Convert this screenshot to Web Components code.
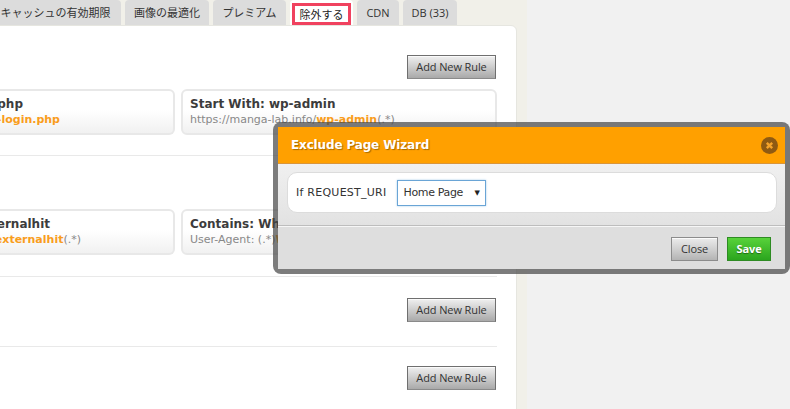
<!DOCTYPE html>
<html>
<head>
<meta charset="utf-8">
<style>
html,body{margin:0;height:409px;overflow:hidden;background:#f1f1f1;font-family:"DejaVu Sans","Noto Sans CJK JP",sans-serif}
</style>
</head>
<body>
<settings-page>
  <tab-bar slot="tabs">
    <tab-item style="--w:131px;margin-left:-10px;">キャッシュの有効期限</tab-item>
    <tab-item style="--w:84px">画像の最適化</tab-item>
    <tab-item style="--w:73px">プレミアム</tab-item>
    <tab-item style="--w:63px" active>除外する</tab-item>
    <tab-item style="--w:42px" latin>CDN</tab-item>
    <tab-item style="--w:54px" latin>DB (33)</tab-item>
  </tab-bar>
  <rule-section style="--top:29px;--bottom:20px">
    <rule-card title-end="142" sub-end="105" title-text="Is: wp-login.php" sub-text="https://manga-lab.info/" hit="wp-login.php"></rule-card>
    <rule-card wide title-text="Start With: wp-admin" sub-text="https://manga-lab.info/" hit="wp-admin" tail="(.*)"></rule-card>
  </rule-section>
  <rule-section style="--top:19px;--bottom:21px">
    <rule-card title-end="115" sub-end="84" title-text="Contains: facebookexternalhit" sub-text="User-Agent: (.*)" hit="facebookexternalhit" tail="(.*)"></rule-card>
    <rule-card wide title-text="Contains: WhatsApp" sub-text="User-Agent: (.*)" hit="WhatsApp" tail="(.*)"></rule-card>
  </rule-section>
  <rule-section style="--top:21px;--bottom:24px"></rule-section>
  <rule-section style="--top:19px;--bottom:24px" last></rule-section>
</settings-page>
<exclude-wizard></exclude-wizard>

<script>
const buttonStyle = `
.btn{
    box-sizing:border-box;
    display:flex;
    align-items:center;
    justify-content:center;
    height:24px;
    padding-bottom:1px;
    font:11px "Open Sans","DejaVu Sans",sans-serif;
    letter-spacing:-.1px;
    color:#333;
    border:1px solid #6f6f6f;
    border-bottom-color:#8a8a8a;
    background:linear-gradient(#f0f0f0,#a9a9a9);
    box-shadow:inset 0 1px 0 #fafafa
}
`

class SettingsPage extends HTMLElement{
    constructor(){
        super();
        this._shadowroot = this.attachShadow({mode:'open'})
    }
    connectedCallback(){
        this._shadowroot.innerHTML=`
        <style>
        :host{display:block;width:517px;height:409px;padding-right:10px;background:#f1f0e9;overflow:hidden}
        .panel{
            box-sizing:border-box;
            height:400px;
            margin-left:-10px;
            padding:0 19px 0 0;
            background:#fff;
            border:1px solid #e6e6e0;
            border-radius:0 6px 0 0
        }
        </style>
        <slot name="tabs"></slot>
        <div class="panel"><slot></slot></div>
        `
    }
}

class TabBar extends HTMLElement{
    constructor(){
        super();
        this.attachShadow({mode:'open'}).innerHTML=`
        <style>
        :host{display:flex;height:25px;gap:4px;align-items:stretch}
        </style>
        <slot></slot>
        `
    }
}

class TabItem extends HTMLElement{
    constructor(){
        super();
        this.attachShadow({mode:'open'}).innerHTML=`
        <style>
        :host{
            box-sizing:border-box;
            display:flex;
            flex:none;
            width:var(--w);
            align-items:center;
            justify-content:center;
            padding-bottom:1px;
            font:11px "Noto Sans CJK JP",sans-serif;
            color:#333;
            background:#dcdcdc;
            border-radius:4px 4px 0 0
        }
        :host([latin]){font:11px "Open Sans",sans-serif}
        :host([active]){
            color:#222;
            background:#fff
        }
        .mark{display:flex;align-items:center;justify-content:center;box-sizing:border-box}
        :host([active]) .mark{
            width:59px;
            height:22px;
            margin-top:3px;
            border:3px solid #f0425f
        }
        </style>
        <div class="mark"><slot></slot></div>
        `
    }
}

class RuleSection extends HTMLElement{
    constructor(){
        super();
        this.attachShadow({mode:'open'}).innerHTML=`
        <style>
        ${buttonStyle}
        :host{
            display:block;
            padding:var(--top) 0 var(--bottom);
            border-bottom:1px solid #e9e9e9
        }
        :host([last]){border-bottom:0}
        .head{display:flex;justify-content:flex-end;padding-right:1px}
        .btn{width:89px}
        .cards{display:flex;gap:6px}
        .cards.filled{margin-top:10px}
        </style>
        <div class="head"><div class="btn">Add New Rule</div></div>
        <div class="cards"><slot></slot></div>
        `
    }
    connectedCallback(){
        if(this.children.length){
            this.shadowRoot.querySelector('.cards').classList.add('filled')
        }
    }
}

class RuleCard extends HTMLElement{
    constructor(){
        super();
        this._shadowroot = this.attachShadow({mode:'open'})
    }
    connectedCallback(){
        const titleEnd = this.getAttribute('title-end')
        const subEnd = this.getAttribute('sub-end')
        const tail = this.getAttribute('tail') || ''
        this._shadowroot.innerHTML=`
        <style>
        :host{
            box-sizing:border-box;
            display:block;
            flex:none;
            width:184px;
            height:46px;
            padding:5px 8px 0 7px;
            border:2px solid #e8e8e8;
            border-left-width:0;
            border-radius:0 6px 6px 0;
            background:linear-gradient(#fff 45%,#f1f1f1);
            white-space:nowrap
        }
        :host([wide]){width:316px;border-left-width:2px;border-radius:6px}
        .title{font:bold 12px/16px "DejaVu Sans",sans-serif;color:#3c3c3c}
        .sub{font:11px/16px "DejaVu Sans",sans-serif;color:#888}
        b{color:#f99d1c}
        .end{display:flex;justify-content:flex-end}
        </style>
        <div class="title ${titleEnd ? 'end' : ''}" style="${titleEnd ? 'padding-right:'+titleEnd+'px' : ''}"><span>${this.getAttribute('title-text')}</span></div>
        <div class="sub ${subEnd ? 'end' : ''}" style="${subEnd ? 'padding-right:'+subEnd+'px' : ''}"><span>${this.getAttribute('sub-text')}<b>${this.getAttribute('hit')}</b>${tail}</span></div>
        `
    }
}

class ExcludeWizard extends HTMLElement{
    constructor(){
        super();
        this.attachShadow({mode:'open'}).innerHTML=`
        <style>
        ${buttonStyle}
        :host{
            position:absolute;
            left:273px;
            top:122px;
            box-sizing:border-box;
            display:flex;
            flex-direction:column;
            width:517px;
            height:152px;
            border:5px solid rgba(68,68,68,.7);
            border-radius:8px;
            background:#e4e4e4;
            background-clip:padding-box
        }
        .head{
            box-sizing:border-box;
            display:flex;
            flex:none;
            height:37px;
            align-items:center;
            justify-content:space-between;
            padding:0 7px 0 13px;
            background:#ffa000;
            border-bottom:1px solid #d9953a;
            font:bold 12px "DejaVu Sans",sans-serif;
            letter-spacing:-.15px;
            color:#fff;
            text-shadow:1px 1px 1px #a86a00
        }
        .body{
            flex:none;
            height:62px;
            box-sizing:border-box;
            padding:8px 8px 0 9px;
            background:linear-gradient(#f0f0f0,#e2e2e2);
            border-bottom:1px solid #bdbdbd
        }
        .rule{
            box-sizing:border-box;
            display:flex;
            align-items:center;
            height:41px;
            gap:10px;
            padding-left:8px;
            background:#fff;
            border:1px solid #dcdcdc;
            border-radius:10px;
            font:11px "DejaVu Sans",sans-serif;
            color:#333
        }
        .label{letter-spacing:.25px}
        .select{
            box-sizing:border-box;
            display:flex;
            align-items:center;
            justify-content:space-between;
            width:89px;
            height:26px;
            padding:0 5px 0 6px;
            border:1px solid #6aa5d6;
            box-shadow:0 0 2px #a9cdea;
            letter-spacing:-.35px
        }
        .arrow{font-size:7px;color:#222}
        .foot{
            flex:1;
            display:flex;
            justify-content:flex-end;
            align-items:flex-start;
            gap:9px;
            padding:10px 14px 0 0;
            border-top:1px solid #f6f6f6;
            background:#dedede
        }
        .close{width:47px;background:linear-gradient(#ececec,#b4b4b4);border-color:#8c8c8c}
        .save{
            width:44px;
            font-weight:bold;
            color:#fff;
            text-shadow:0 1px 1px #1f6b12;
            border-color:#2e8b23;
            background:linear-gradient(#58d23a,#2ba51e);
            box-shadow:none
        }
        svg{display:block}
        </style>
        <div class="head">
            <span>Exclude Page Wizard</span>
            <svg width="17" height="17" viewBox="0 0 17 17">
                <circle cx="8.5" cy="8.5" r="8.5" fill="#8f5a12"/>
                <path d="M5.8 5.8 11.2 11.2M11.2 5.8 5.8 11.2" stroke="#f5a32a" stroke-width="2.4"/>
            </svg>
        </div>
        <div class="body">
            <div class="rule">
                <span class="label">If REQUEST_URI</span>
                <div class="select"><span>Home Page</span><span class="arrow">▼</span></div>
            </div>
        </div>
        <div class="foot">
            <div class="btn close">Close</div>
            <div class="btn save">Save</div>
        </div>
        `
    }
}

window.customElements.define('settings-page',SettingsPage)
window.customElements.define('tab-bar',TabBar)
window.customElements.define('tab-item',TabItem)
window.customElements.define('rule-section',RuleSection)
window.customElements.define('rule-card',RuleCard)
window.customElements.define('exclude-wizard',ExcludeWizard)
</script>
</body>
</html>
